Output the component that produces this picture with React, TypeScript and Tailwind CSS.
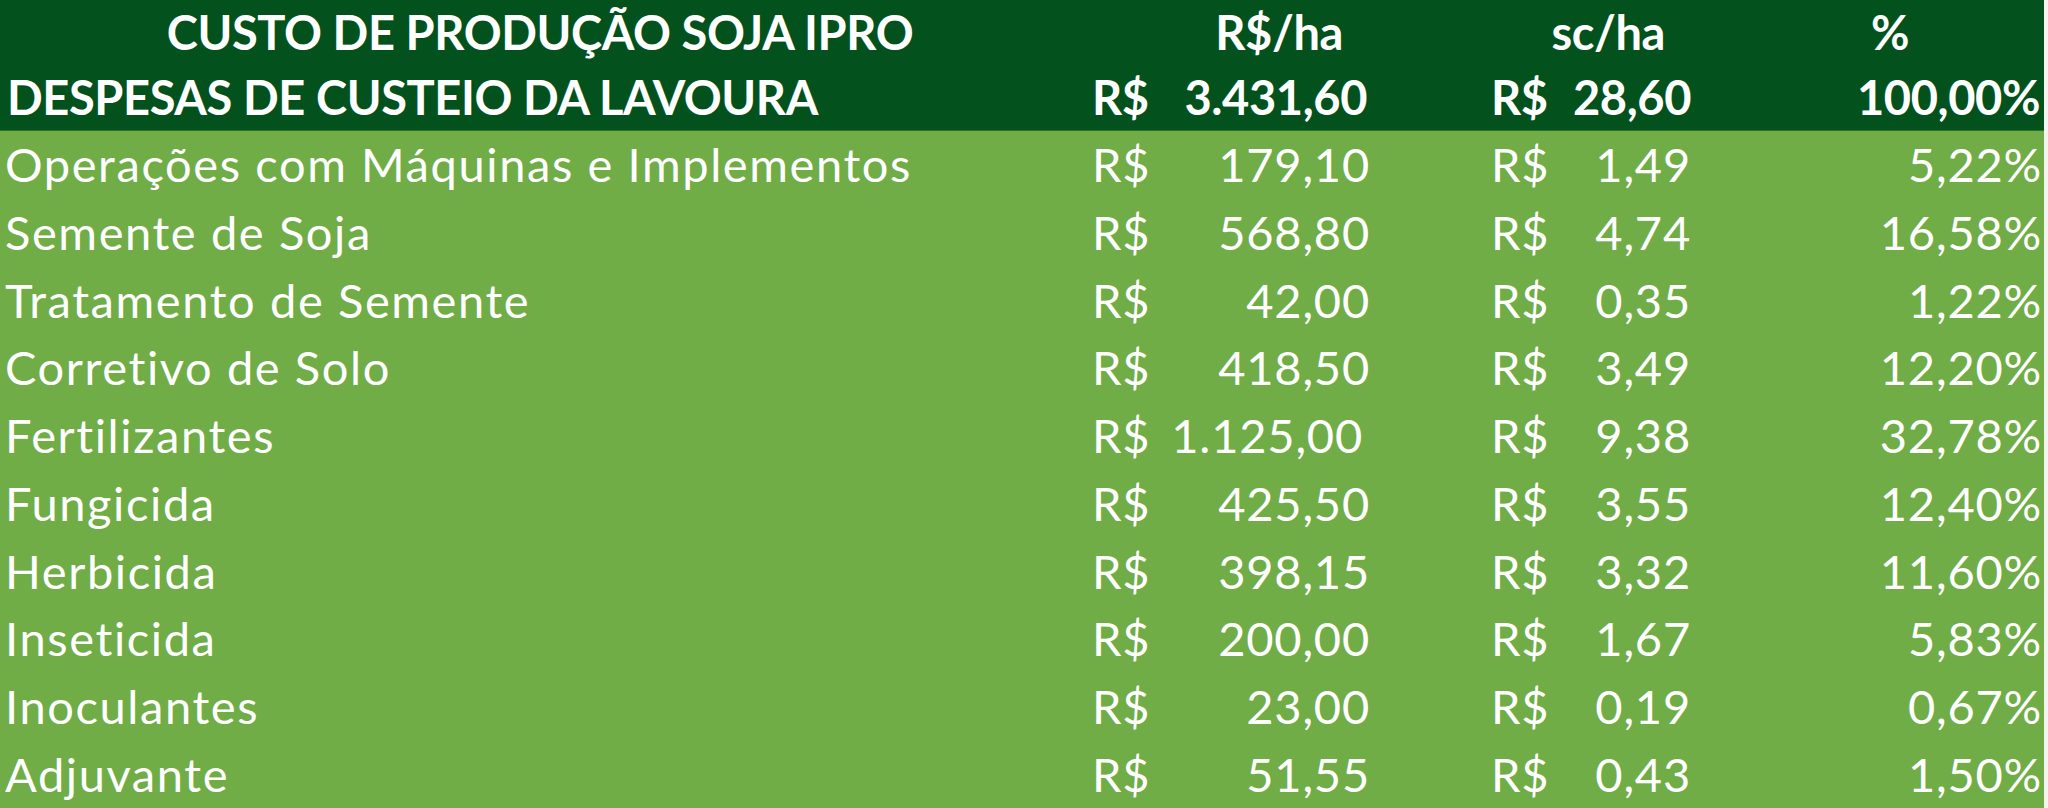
import React from 'react';

const rows = [
  { label: 'Operações com Máquinas e Implementos', ha: '179,10', sc: '1,49', pct: '5,22%' },
  { label: 'Semente de Soja', ha: '568,80', sc: '4,74', pct: '16,58%' },
  { label: 'Tratamento de Semente', ha: '42,00', sc: '0,35', pct: '1,22%' },
  { label: 'Corretivo de Solo', ha: '418,50', sc: '3,49', pct: '12,20%' },
  { label: 'Fertilizantes', ha: '1.125,00', sc: '9,38', pct: '32,78%', shift: true },
  { label: 'Fungicida', ha: '425,50', sc: '3,55', pct: '12,40%' },
  { label: 'Herbicida', ha: '398,15', sc: '3,32', pct: '11,60%' },
  { label: 'Inseticida', ha: '200,00', sc: '1,67', pct: '5,83%' },
  { label: 'Inoculantes', ha: '23,00', sc: '0,19', pct: '0,67%' },
  { label: 'Adjuvante', ha: '51,55', sc: '0,43', pct: '1,50%' },
];

const grid = 'grid grid-cols-[1080px_300px_320px_344px] items-center';

export default function App() {
  return (
    <div className="flex w-[2048px] h-[808px] text-white text-[47px] leading-none [font-family:Lato,'Open_Sans',sans-serif]">
      <div className="flex flex-col w-[2044px]">
        {/* Header */}
        <div className="bg-[#03521d] font-bold tracking-[-0.4px] border-b border-[#2f6f2a]">
          <div className={`${grid} h-[65px]`}>
            <div className="text-center">CUSTO DE PRODUÇÃO SOJA IPRO</div>
            <div className="text-right pr-[37px]">R$/ha</div>
            <div className="text-right pr-[35px]">sc/ha</div>
            <div className="text-right pr-[135px]">%</div>
          </div>
          <div className={`${grid} h-[65px]`}>
            <div className="pl-[7px]">DESPESAS DE CUSTEIO DA LAVOURA</div>
            <div className="flex justify-between pl-[12px] pr-[13px]">
              <span>R$</span>
              <span>3.431,60</span>
            </div>
            <div className="flex justify-between pl-[111px] pr-[9px]">
              <span>R$</span>
              <span>28,60</span>
            </div>
            <div className="text-right pr-[4px]">100,00%</div>
          </div>
        </div>

        {/* Rows */}
        <div className="flex-1 flex flex-col bg-[#70ad47] tracking-[0.8px]">
          {rows.map((r) => (
            <div key={r.label} className={`${grid} flex-1`}>
              <div className="pl-[5px] whitespace-nowrap tracking-[1.6px]">{r.label}</div>
              <div className={`flex justify-between pl-[12px] ${r.shift ? 'pr-[17px]' : 'pr-[10px]'}`}>
                <span>R$</span>
                <span>{r.ha}</span>
              </div>
              <div className="flex justify-between pl-[111px] pr-[9px]">
                <span>R$</span>
                <span>{r.sc}</span>
              </div>
              <div className="text-right pr-[2px]">{r.pct}</div>
            </div>
          ))}
        </div>
      </div>
      <div className="w-[4px] bg-[#f3f6f0]" />
    </div>
  );
}
